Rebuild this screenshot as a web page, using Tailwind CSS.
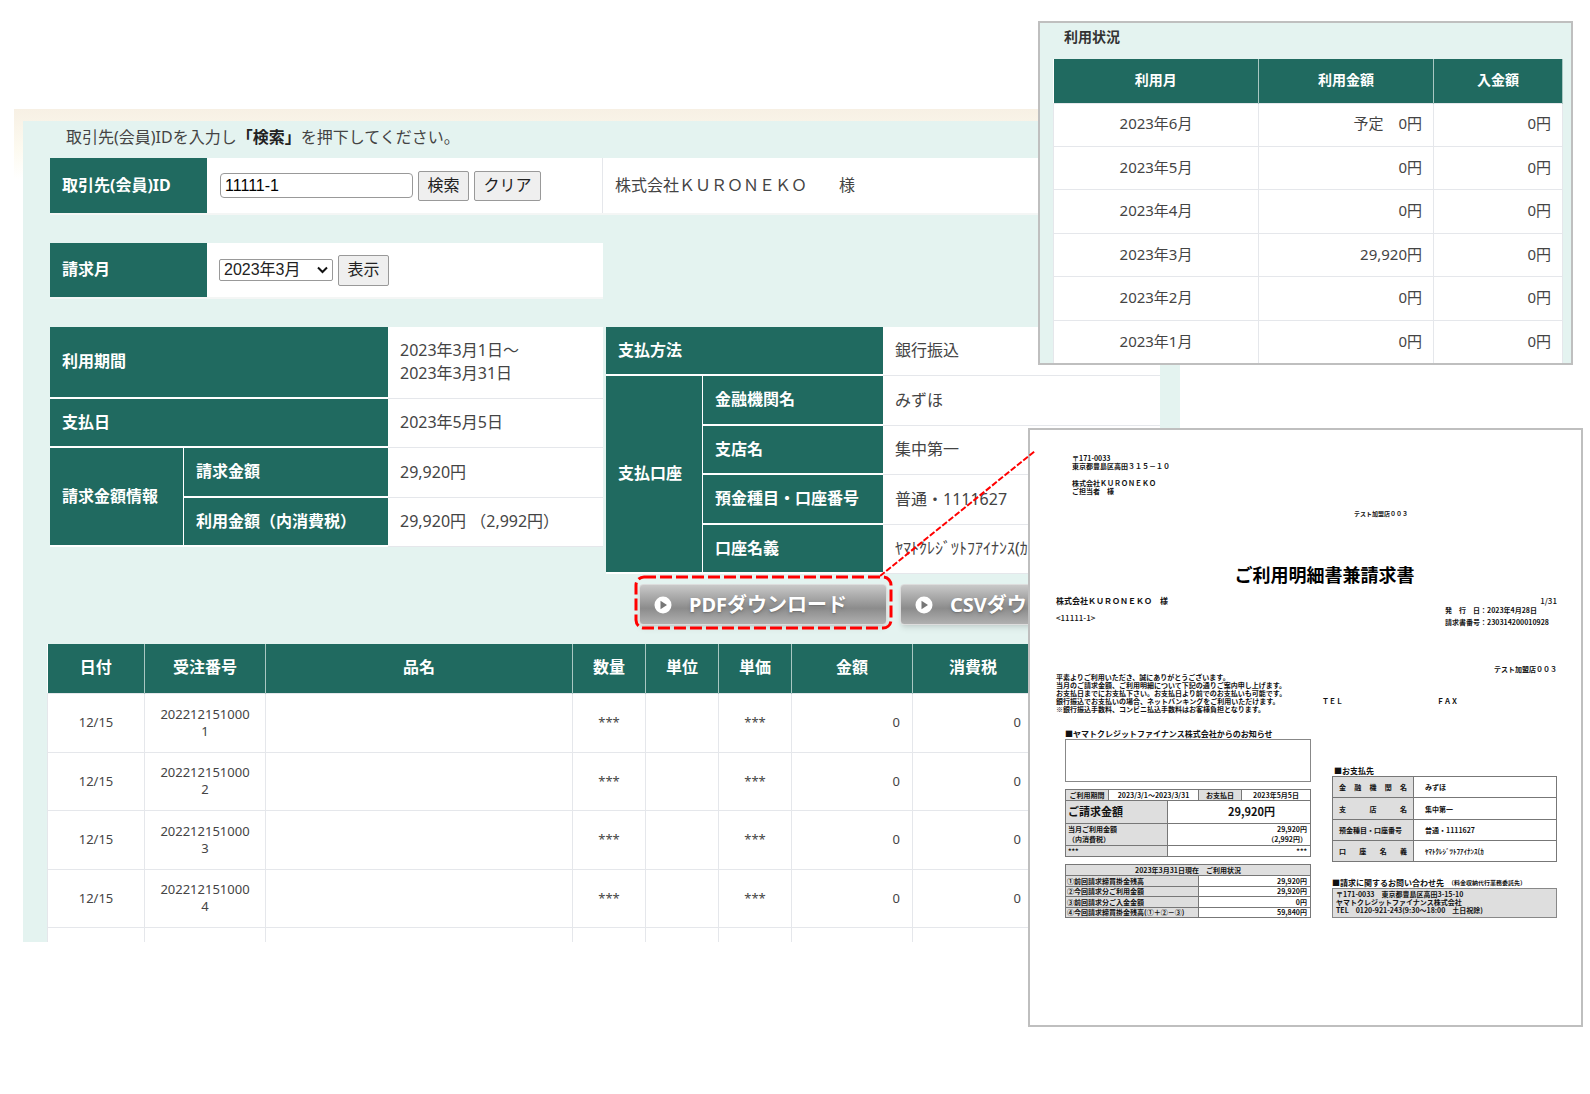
<!DOCTYPE html>
<html lang="ja">
<head>
    <meta charset="UTF-8">
    <meta name="viewport" content="width=device-width, initial-scale=1.0">
    <title>ご利用明細照会</title>
    <script src="https://cdn.jsdelivr.net/npm/@tailwindcss/browser@4"></script>
</head>
<body class="bg-white text-[#444] font-['Noto_Sans','Noto_Sans_CJK_JP',sans-serif]">
    <div class="relative min-h-screen pt-[109px] pl-[14px]">

        <!-- Main panel -->
        <main class="w-full max-w-[1166px] pt-3 pl-[9px] bg-linear-to-b from-[#f7f0e4] via-[#fdfaf0] via-[40px] to-white to-[70px]">
            <div class="bg-[#e4f3f0] pl-[27px] pr-5 pt-1">
                <p class="pl-4 leading-6 mb-[9px]">取引先(会員)IDを入力し<b class="text-[#222]">「検索」</b>を押下してください。</p>

                <!-- Customer search -->
                <form class="flex h-[57px] bg-white border-b-2 border-[#f4f6f5] mb-7" onsubmit="return false">
                    <label for="customerId" class="w-[157px] bg-[#206a60] text-white font-bold flex items-center pl-3 pb-[2px]">取引先(会員)ID</label>
                    <div class="w-[396px] flex items-center gap-[5px] pl-[13px] border-r border-gray-200">
                        <input type="text" id="customerId" value="11111-1" class="w-[193px] h-[25px] border border-[#999] rounded-sm px-1 text-black bg-white font-['Liberation_Sans',sans-serif]">
                        <button type="submit" class="h-[30px] w-[51px] border border-[#999] rounded-xs bg-[#efefef] text-[#222] pb-[2px]">検索</button>
                        <button type="button" class="h-[30px] w-[67px] border border-[#999] rounded-xs bg-[#efefef] text-[#222] pb-[2px]">クリア</button>
                    </div>
                    <p class="flex items-center pl-3 pb-[2px]">株式会社ＫＵＲＯＮＥＫＯ　　様</p>
                </form>

                <!-- Billing month -->
                <form class="flex w-[553px] h-[56px] bg-white border-b-2 border-[#f4f6f5] mb-7" onsubmit="return false">
                    <label for="month" class="w-[157px] bg-[#206a60] text-white font-bold flex items-center pl-3 pb-[2px]">請求月</label>
                    <div class="flex items-center gap-[5px] pl-3">
                        <div class="relative flex">
                            <select id="month" class="appearance-none w-[114px] h-[22px] border border-[#999] rounded-xs bg-white text-[#222] pl-1 leading-5 font-['Liberation_Sans','Noto_Sans_CJK_JP',sans-serif]">
                                <option>2023年3月</option>
                                <option>2023年2月</option>
                                <option>2023年1月</option>
                            </select>
                            <svg class="absolute right-[5px] top-[7px] w-[11px] h-[8px] pointer-events-none" viewBox="0 0 11 8" fill="none" stroke="#111" stroke-width="2"><path d="M1 1.5 5.5 6 10 1.5"/></svg>
                        </div>
                        <button type="submit" class="h-[31px] w-[51px] border border-[#999] rounded-xs bg-[#efefef] text-[#222] pb-[2px]">表示</button>
                    </div>
                </form>

                <!-- Summary tables -->
                <div class="flex items-start gap-[3px]">
                    <table class="w-[553px] table-fixed text-left bg-white border-separate border-spacing-0 [&_th]:bg-[#206a60] [&_th]:text-white [&_th]:border-b-2 [&_th]:border-white [&_th]:pl-3 [&_th]:pt-0 [&_th]:pb-[2px] [&_td]:pl-3 [&_td]:pt-0 [&_td]:pb-[2px] [&_td]:border-b [&_td]:border-gray-200">
                        <colgroup><col class="w-[134px]"><col class="w-[204px]"><col></colgroup>
                        <tr class="h-[72px]"><th colspan="2">利用期間</th><td class="leading-[23px]">2023年3月1日～<br>2023年3月31日</td></tr>
                        <tr class="h-[49px]"><th colspan="2">支払日</th><td>2023年5月5日</td></tr>
                        <tr class="h-[50px]"><th rowspan="2" class="border-r border-r-[#a9c7c2]">請求金額情報</th><th>請求金額</th><td>29,920円</td></tr>
                        <tr class="h-[49px]"><th>利用金額（内消費税）</th><td>29,920円 （2,992円）</td></tr>
                    </table>
                    <table class="flex-1 table-fixed text-left bg-white border-separate border-spacing-0 [&_th]:bg-[#206a60] [&_th]:text-white [&_th]:border-b-2 [&_th]:border-white [&_th]:pl-3 [&_th]:pt-0 [&_th]:pb-[2px] [&_td]:pl-3 [&_td]:pt-0 [&_td]:pb-[2px] [&_td]:border-b [&_td]:border-gray-200">
                        <colgroup><col class="w-[97px]"><col class="w-[180px]"><col></colgroup>
                        <tr class="h-[49px]"><th colspan="2">支払方法</th><td>銀行振込</td></tr>
                        <tr class="h-[50px]"><th rowspan="4" class="border-r border-r-[#a9c7c2]">支払口座</th><th>金融機関名</th><td>みずほ</td></tr>
                        <tr class="h-[49px]"><th>支店名</th><td>集中第一</td></tr>
                        <tr class="h-[50px]"><th>預金種目・口座番号</th><td>普通・1111627</td></tr>
                        <tr class="h-[49px]"><th>口座名義</th><td>ﾔﾏﾄｸﾚｼﾞﾂﾄﾌｱｲﾅﾝｽ(ｶ</td></tr>
                    </table>
                </div>

                <!-- Download buttons -->
                <div class="flex gap-[13px] pl-[589px] mt-[10px] mb-[19px]">
                    <div class="relative">
                        <button type="button" class="flex items-center w-[248px] h-[41px] pl-[14px] gap-[17px] rounded-sm border border-[#ddd] bg-linear-to-b from-[#c9c9c9] via-[#8c8c8c] via-60% to-[#b0b0b0] text-white text-xl font-bold shadow-md text-shadow-md">
                            <svg class="w-[18px] h-[18px]" viewBox="0 0 18 18"><circle cx="9" cy="9" r="8.5" fill="#fff"/><path d="M6.5 4.8v8.4L13 9z" fill="#777"/></svg>
                            PDFダウンロード
                        </button>
                        <svg class="absolute -left-[5px] -top-[9px] w-[260px] h-[56px] pointer-events-none" viewBox="0 0 260 56"><rect x="2" y="2" width="255" height="51" rx="8" fill="none" stroke="#f00" stroke-width="3" stroke-dasharray="12 4"/></svg>
                    </div>
                    <button type="button" class="flex items-center w-[248px] h-[41px] pl-[14px] gap-[17px] rounded-sm border border-[#ddd] bg-linear-to-b from-[#c9c9c9] via-[#8c8c8c] via-60% to-[#b0b0b0] text-white text-xl font-bold shadow-md text-shadow-md">
                        <svg class="w-[18px] h-[18px]" viewBox="0 0 18 18"><circle cx="9" cy="9" r="8.5" fill="#fff"/><path d="M6.5 4.8v8.4L13 9z" fill="#777"/></svg>
                        CSVダウンロード
                    </button>
                </div>

                <!-- Detail rows -->
                <table class="-ml-[3px] w-[987px] h-[298px] table-fixed text-center text-[13px] leading-[17px] bg-white border-collapse [&_td]:border [&_td]:border-gray-200 [&_th]:border-r [&_th]:border-[#a9c7c2] [&_th]:pt-0 [&_th]:pb-[2px] [&_td]:p-0">
                    <colgroup><col class="w-[97px]"><col class="w-[121px]"><col><col class="w-[73px]"><col class="w-[73px]"><col class="w-[73px]"><col class="w-[121px]"><col class="w-[121px]"></colgroup>
                    <thead class="bg-[#206a60] text-white text-base">
                        <tr class="h-[49px]"><th>日付</th><th>受注番号</th><th>品名</th><th>数量</th><th>単位</th><th>単価</th><th>金額</th><th>消費税</th></tr>
                    </thead>
                    <tbody>
                        <tr class="h-[59px]"><td>12/15</td><td>202212151000<br>1</td><td></td><td>***</td><td></td><td>***</td><td><p class="text-right pr-3">0</p></td><td><p class="text-right pr-3">0</p></td></tr>
                        <tr class="h-[58px]"><td>12/15</td><td>202212151000<br>2</td><td></td><td>***</td><td></td><td>***</td><td><p class="text-right pr-3">0</p></td><td><p class="text-right pr-3">0</p></td></tr>
                        <tr class="h-[59px]"><td>12/15</td><td>202212151000<br>3</td><td></td><td>***</td><td></td><td>***</td><td><p class="text-right pr-3">0</p></td><td><p class="text-right pr-3">0</p></td></tr>
                        <tr class="h-[58px]"><td>12/15</td><td>202212151000<br>4</td><td></td><td>***</td><td></td><td>***</td><td><p class="text-right pr-3">0</p></td><td><p class="text-right pr-3">0</p></td></tr>
                        <tr class="h-[15px] [&_td]:border-b-0"><td></td><td></td><td></td><td></td><td></td><td></td><td></td><td></td></tr>
                    </tbody>
                </table>
            </div>
        </main>

        <!-- Usage popup -->
        <section class="absolute left-[1038px] top-[21px] w-[535px] h-[344px] overflow-hidden border-2 border-[#bfbfbf] bg-[#e4f3f0] pl-[13px] pr-2">
            <h2 class="pl-[11px] text-[14px] font-bold text-[#333] leading-7 mb-2">利用状況</h2>
            <table class="w-full h-[305px] table-fixed text-[15px] bg-white border-collapse [&_td]:border [&_td]:border-gray-200 [&_th]:border-r [&_th]:border-[#a9c7c2] [&_th]:pt-0 [&_th]:pb-[2px] [&_td]:pt-0 [&_td]:pb-[2px]">
                <colgroup><col class="w-[205px]"><col class="w-[175px]"><col></colgroup>
                <thead class="bg-[#206a60] text-white text-[14px]">
                    <tr class="h-[44px]"><th>利用月</th><th>利用金額</th><th>入金額</th></tr>
                </thead>
                <tbody class="[&_td]:px-[11px] text-right">
                    <tr><td class="text-center">2023年6月</td><td>予定　0円</td><td>0円</td></tr>
                    <tr><td class="text-center">2023年5月</td><td>0円</td><td>0円</td></tr>
                    <tr><td class="text-center">2023年4月</td><td>0円</td><td>0円</td></tr>
                    <tr><td class="text-center">2023年3月</td><td>29,920円</td><td>0円</td></tr>
                    <tr><td class="text-center">2023年2月</td><td>0円</td><td>0円</td></tr>
                    <tr><td class="text-center">2023年1月</td><td>0円</td><td>0円</td></tr>
                </tbody>
            </table>
        </section>

        <!-- Invoice sheet -->
        <article class="absolute left-[1028px] top-[428px] w-[555px] h-[599px] border-2 border-[#bfbfbf] bg-white text-[#111] text-[7px] leading-[8px] font-bold font-['Noto_Sans_CJK_JP',sans-serif] pl-[26px] pr-6 pt-6">
            <address class="not-italic pl-4">
                <p>〒171-0033</p>
                <p>東京都豊島区高田３１５－１０</p>
                <p class="mt-[9px]">株式会社ＫＵＲＯＮＥＫＯ</p>
                <p>ご担当者　様</p>
            </address>
            <p class="pl-[298px] mt-[15px] text-[6px]">テスト加盟店００３</p>
            <h1 class="text-[18px] leading-6 text-black text-center mt-[44px] pl-9">ご利用明細書兼請求書</h1>

            <div class="flex justify-between mt-[11px]">
                <div class="text-[8px]">
                    <p>株式会社ＫＵＲＯＮＥＫＯ　様</p>
                    <p class="mt-[9px] font-medium">&lt;11111-1&gt;</p>
                </div>
                <div>
                    <p class="text-[8px] text-right font-medium">1/31</p>
                    <p class="mt-px pr-2">発　行　日：2023年4月28日</p>
                    <p class="mt-[4px] pr-2">請求書番号：230314200010928</p>
                </div>
            </div>
            <p class="text-right mt-[39px]">テスト加盟店００３</p>

            <div class="flex items-start">
                <div class="w-[266px]">
                    <p>平素よりご利用いただき、誠にありがとうございます。</p>
                    <p>当月のご請求金額、ご利用明細について下記の通りご案内申し上げます。</p>
                    <p>お支払日までにお支払下さい。お支払日より前でのお支払いも可能です。</p>
                    <p>銀行振込でお支払いの場合、ネットバンキングをご利用いただけます。</p>
                    <p>※銀行振込手数料、コンビニ払込手数料はお客様負担となります。</p>
                </div>
                <p class="mt-6 w-[115px]">ＴＥＬ</p>
                <p class="mt-6">ＦＡＸ</p>
            </div>

            <div class="flex items-start gap-[21px] pl-[9px] mt-[17px]">
                <div class="w-[246px]">
                    <h2 class="text-[8px]">■ヤマトクレジットファイナンス株式会社からのお知らせ</h2>
                    <div class="h-[43px] border border-[#888] mt-px mb-[7px]"></div>
                    <div class="border border-[#777]">
                        <div class="flex h-[11px] items-stretch text-center leading-[11px] border-b border-[#777]">
                            <p class="w-[43px] bg-[#dedede] border-r border-[#777]">ご利用期間</p>
                            <p class="w-[90px] border-r border-[#777]">2023/3/1～2023/3/31</p>
                            <p class="w-[43px] bg-[#dedede] border-r border-[#777]">お支払日</p>
                            <p class="flex-1">2023年5月5日</p>
                        </div>
                        <div class="flex h-[23px] text-[11px] leading-[20px] border-b border-[#777]">
                            <p class="w-[102px] bg-[#dedede] border-r border-[#777] pl-[2px]">ご請求金額</p>
                            <p class="flex-1 pl-[60px]">29,920円</p>
                        </div>
                        <div class="flex h-[22px] leading-[10px] border-b border-[#777]">
                            <p class="w-[102px] bg-[#dedede] border-r border-[#777] pl-[2px]">当月ご利用金額<br>（内消費税）</p>
                            <p class="flex-1 text-right pr-[3px]">29,920円<br>（2,992円）</p>
                        </div>
                        <div class="flex h-[10px] leading-[11px]">
                            <p class="w-[102px] bg-[#dedede] border-r border-[#777] pl-[2px]">***</p>
                            <p class="flex-1 text-right pr-[3px]">***</p>
                        </div>
                    </div>
                    <table class="w-full table-fixed mt-[7px] leading-[9px] border-collapse [&_td]:border [&_td]:border-[#777] [&_th]:border [&_th]:border-[#777] [&_th]:bg-[#dedede] [&_td]:pr-[3px] [&_td]:text-right">
                        <colgroup><col class="w-[133px]"><col></colgroup>
                        <tr class="h-[11px]"><th colspan="2">2023年3月31日現在　ご利用状況</th></tr>
                        <tr class="h-[11px]"><th class="text-left pl-px">①前回請求締買掛金残高</th><td>29,920円</td></tr>
                        <tr class="h-[10px]"><th class="text-left pl-px">②今回請求分ご利用金額</th><td>29,920円</td></tr>
                        <tr class="h-[11px]"><th class="text-left pl-px">③前回請求分ご入金金額</th><td>0円</td></tr>
                        <tr class="h-[10px]"><th class="text-left pl-px">④今回請求締買掛金残高(①＋②－③)</th><td>59,840円</td></tr>
                    </table>
                </div>

                <div class="flex-1 mt-[37px]">
                    <h2 class="text-[8px] pl-[2px]">■お支払先</h2>
                    <table class="w-full table-fixed mt-px border-collapse [&_td]:border [&_td]:border-[#777] [&_th]:border [&_th]:border-[#777] [&_th]:bg-[#dedede] [&_th]:text-left [&_th]:px-[6px] [&_td]:pl-[11px]">
                        <colgroup><col class="w-[81px]"><col></colgroup>
                        <tr class="h-[21px]"><th><p class="flex justify-between"><span>金</span><span>融</span><span>機</span><span>関</span><span>名</span></p></th><td>みずほ</td></tr>
                        <tr class="h-[22px]"><th><p class="flex justify-between"><span>支</span><span>店</span><span>名</span></p></th><td>集中第一</td></tr>
                        <tr class="h-[21px]"><th>預金種目・口座番号</th><td>普通・1111627</td></tr>
                        <tr class="h-[21px]"><th><p class="flex justify-between"><span>口</span><span>座</span><span>名</span><span>義</span></p></th><td>ﾔﾏﾄｸﾚｼﾞﾂﾄﾌｱｲﾅﾝｽ(ｶ</td></tr>
                    </table>
                    <h2 class="text-[8px] mt-[17px] flex">■請求に関するお問い合わせ先<span class="text-[6px] pl-1">（料金収納代行業務委託先）</span></h2>
                    <div class="h-[30px] border border-[#888] bg-[#dedede] mt-px pt-px pl-[3px]">
                        <p>〒171-0033　東京都豊島区高田3-15-10</p>
                        <p>ヤマトクレジットファイナンス株式会社</p>
                        <p>TEL　0120-921-243(9:30～18:00　土日祝除)</p>
                    </div>
                </div>
            </div>
        </article>

        <!-- Callout line -->
        <svg class="absolute left-[880px] top-[448px] w-[156px] h-[130px] pointer-events-none" viewBox="0 0 156 130"><path d="M0 128 155 3" stroke="#f00" stroke-width="2" stroke-dasharray="6 2"/></svg>
    </div>
</body>
</html>
